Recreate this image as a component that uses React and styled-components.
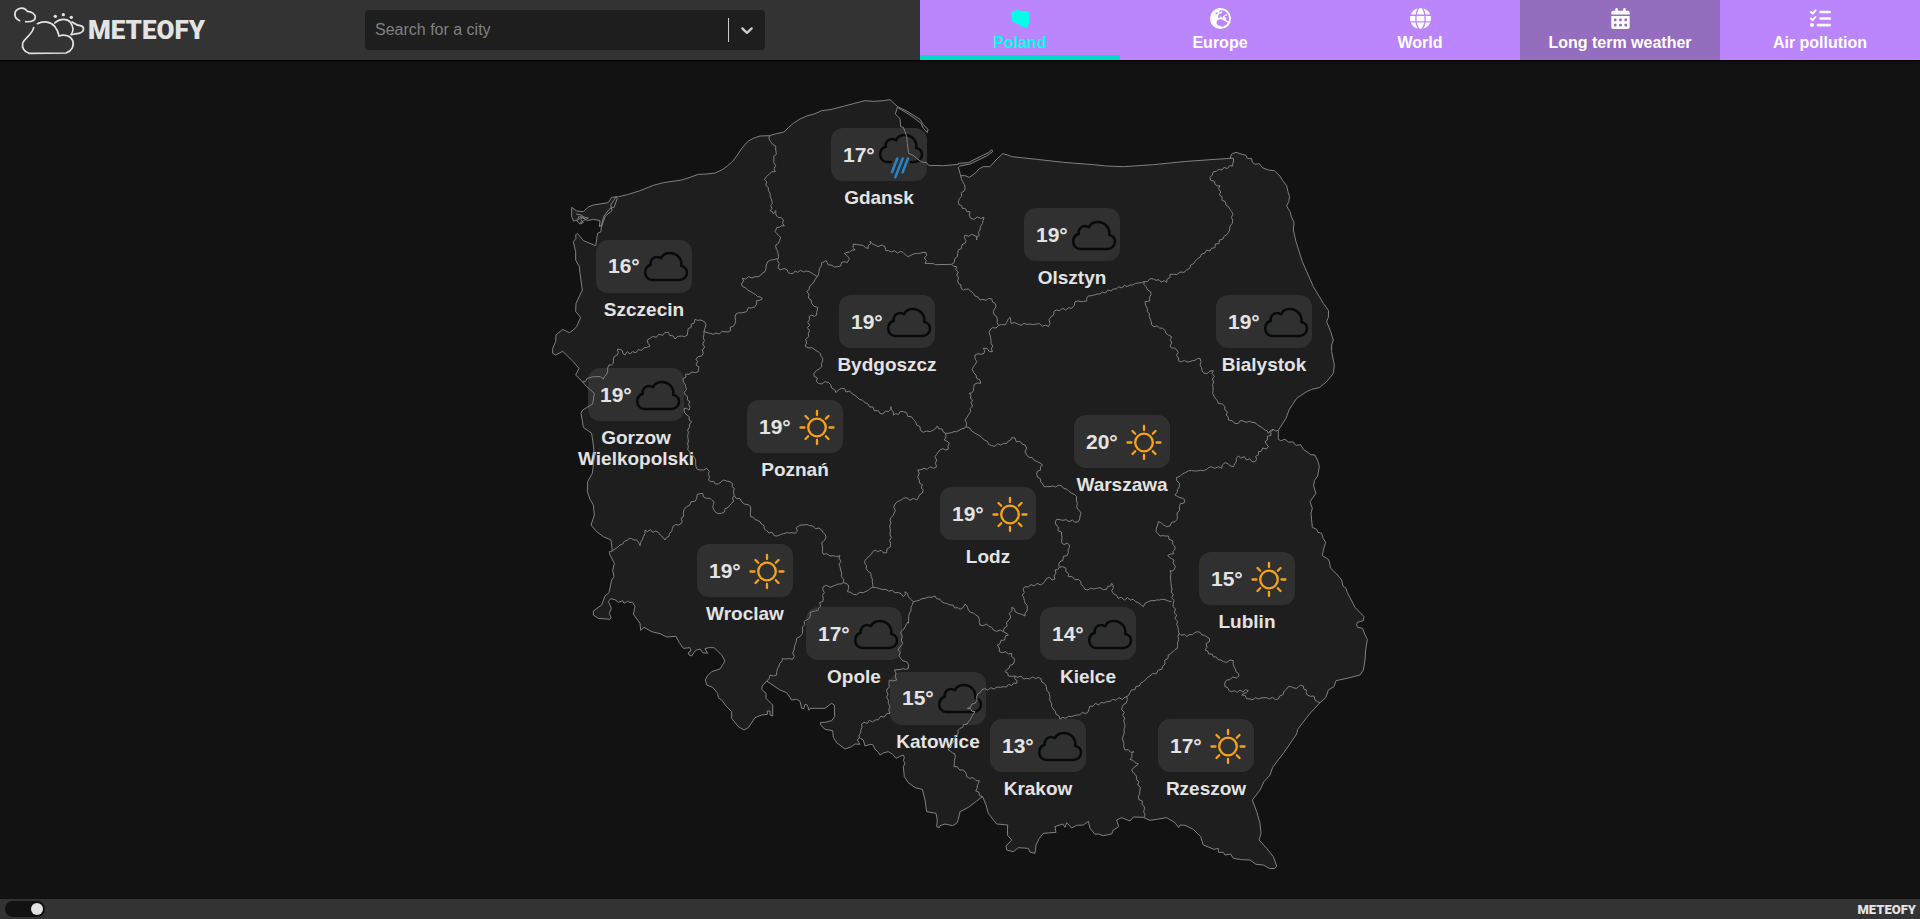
import React from "react";
import styled, { createGlobalStyle } from "styled-components";
import { FaEarthEurope, FaGlobe, FaCalendarDays, FaListCheck } from "react-icons/fa6";

const GlobalStyle = createGlobalStyle`
  * { box-sizing: border-box; }
  body {
    margin: 0;
    background: #121212;
    color: #e3e3e3;
    font-family: "Liberation Sans", Arial, sans-serif;
  }
`;

const Page = styled.div`
  display: flex;
  flex-direction: column;
  min-height: 100vh;
`;

const Header = styled.header`
  display: flex;
  height: 60px;
  background: #333;
  box-shadow: 0 1px 2px #000;
`;

const Brand = styled.a`
  display: flex;
  align-items: center;
  width: 210px;
  padding-left: 12px;
  color: #e3e3e3;
  text-decoration: none;
  svg { flex: none; }
`;

const Wordmark = styled.span`
  font-family: Roboto, "Open Sans", sans-serif;
  font-weight: 900;
  font-size: ${(p) => (p.$small ? 13 : 26)}px;
  line-height: 1;
`;

const SearchArea = styled.form`
  display: flex;
  flex: 1;
  align-items: center;
  justify-content: center;
`;

const SearchBox = styled.div`
  display: flex;
  align-items: center;
  width: 400px;
  height: 40px;
  border-radius: 4px;
  background: #1e1e1e;
`;

const SearchInput = styled.input`
  flex: 1;
  min-width: 0;
  height: 100%;
  padding: 0 10px;
  border: 0;
  outline: 0;
  background: none;
  color: #e3e3e3;
  font: 16px "Liberation Sans", Arial, sans-serif;
  &::placeholder { color: #808080; opacity: 1; }
`;

const SearchToggle = styled.button`
  display: flex;
  align-items: center;
  justify-content: center;
  width: 37px;
  height: 24px;
  padding: 0;
  border: 0;
  border-left: 1px solid #ccc;
  background: none;
  color: #ccc;
`;

const Nav = styled.nav`
  display: flex;
  width: 1000px;
`;

const NavLink = styled.a`
  display: flex;
  flex: 1;
  flex-direction: column;
  align-items: center;
  gap: 4px;
  padding-top: 8px;
  background: ${(p) => (p.$hovered ? "#946dbf" : "#bb86fc")};
  border-bottom: 5px solid ${(p) => (p.$active ? "#03dac6" : "transparent")};
  color: ${(p) => (p.$active ? "#00ffe7" : "#fff")};
  font-size: 16px;
  font-weight: 700;
  line-height: 20px;
  text-decoration: none;
  svg { width: 21px; height: 21px; flex: none; }
`;

const Main = styled.main`
  flex: 1;
  padding: 30px 0 19px;
`;

const Map = styled.div`
  position: relative;
  width: 100%;
  max-width: 840px;
  aspect-ratio: 840 / 790;
  margin: 0 auto;
`;

const MapLayer = styled.svg`
  position: absolute;
  inset: 0;
  width: 100%;
  height: 100%;
  pointer-events: none;
`;

const Pin = styled.a`
  position: absolute;
  left: ${(p) => (p.$x / 840) * 100}%;
  top: ${(p) => (p.$y / 790) * 100}%;
  display: flex;
  flex-direction: column;
  align-items: center;
  gap: 6px;
  width: 130px;
  margin-left: -65px;
  color: #e3e3e3;
  text-decoration: none;
`;

const Reading = styled.span`
  display: flex;
  align-items: center;
  justify-content: space-between;
  width: 96px;
  height: 53px;
  padding: 0 1px 0 12px;
  border-radius: 12px;
  background: #303030;
  font-size: 21px;
  font-weight: 700;
  svg { width: 50px; height: 50px; }
`;

const CityName = styled.span`
  font-size: 19px;
  font-weight: 700;
  line-height: 21px;
  text-align: center;
`;

const Footer = styled.footer`
  display: flex;
  align-items: center;
  justify-content: space-between;
  height: 20px;
  padding: 0 4px 0 5px;
  background: #333;
`;

const ThemeSwitch = styled.input`
  appearance: none;
  display: flex;
  align-items: center;
  justify-content: flex-end;
  width: 40px;
  height: 16px;
  margin: 0;
  padding: 0 2px;
  border-radius: 8px;
  background: #121212;
  &::after {
    content: "";
    width: 12px;
    height: 12px;
    border-radius: 50%;
    background: #e3e3e3;
  }
`;

/* The country is surveyed on six sheets; each has its own origin on the map. */
const SHEETS = {
  nw: [0, 0],
  ne: [1200, 0],
  w: [0, 780],
  e: [1200, 780],
  sw: [120, 1530],
  se: [1260, 1530],
};

const toPoints = (parts) =>
  parts.flatMap(([sheet, text]) => {
    const [dx, dy] = SHEETS[sheet];
    return text.trim().split(/\s+/).map((pair) => {
      const [x, y] = pair.split(",").map(Number);
      return [x + dx, y + dy];
    });
  });

const toPath = (points) => "M" + points.map((p) => p.join(" ")).join("L");

/* Adds the small meanders of a land border between surveyed points. */
const meander = (points) => {
  const out = [points[0]];
  for (let i = 1; i < points.length; i += 1) {
    const [ax, ay] = points[i - 1];
    const [bx, by] = points[i];
    const length = Math.hypot(bx - ax, by - ay);
    const steps = Math.max(1, Math.round(length / 9));
    for (let s = 1; s < steps; s += 1) {
      const t = s / steps;
      const noise = Math.sin((ax + s * 37) * 12.9 + (ay + s * 17) * 78.2) * 3.5;
      out.push([
        Math.round(ax + (bx - ax) * t - ((by - ay) / length) * noise),
        Math.round(ay + (by - ay) * t + ((bx - ax) / length) * noise),
      ]);
    }
    out.push([bx, by]);
  }
  return out;
};

const OUTLINE = toPath(toPoints([
  ["nw", "236,320 262,314 300,302 340,286 370,278 425,270 450,262 475,253 500,252 525,249 545,240 562,228 578,214 590,198 602,180 615,163 627,152 640,145 660,138 688,137 710,131 732,126 745,113 760,100 780,87 800,78 825,71 845,62 870,59 910,49 940,41 975,32 1000,34 1030,32 1050,29 1073,50 1105,66 1140,88 1150,104 1164,118 1162,128 1150,115 1143,100 1110,75 1072,52 1066,72 1080,86 1082,110 1090,112 1095,125 1100,140 1102,160 1106,190 1122,198 1130,205 1145,216 1160,218 1166,226 1210,227 1255,223"],
  ["ne", "55,220 85,218 130,195 145,188 156,179 158,185 140,198 90,222 60,228 55,232 62,257 75,257 88,262 105,250 118,236 130,230 150,230 168,210 188,191 203,195 215,200 290,208 370,217 460,224 500,228 550,230 640,224 740,214 870,205 875,192 888,187 900,191 918,196 922,205 935,206 937,217 945,223 958,221 967,233 985,240 1003,242 1020,258 1028,272 1040,287 1044,305 1049,320 1046,335 1040,348 1050,365 1055,382 1062,397 1060,420 1068,455 1087,515 1120,590 1150,640 1166,662 1165,682 1160,695 1172,725 1180,750 1175,765 1175,785 1182,820"],
  ["e", "1183,45 1180,70 1160,95 1138,113 1115,118 1100,125 1070,145 1058,163 1047,180 1038,205 1015,241 1015,268 1022,272 1035,268 1045,276 1060,276 1065,284 1070,286 1082,284 1090,298 1105,308 1112,314 1125,315 1134,335 1138,350 1133,378 1123,392 1121,408 1128,430 1110,455 1117,475 1113,490 1117,532 1130,538 1134,547 1145,550 1150,566 1157,577 1150,600 1147,617 1165,628 1168,635 1172,655 1190,672 1205,690 1209,708 1218,715 1222,728 1245,772 1272,800 1270,812 1252,817 1250,825"],
  ["se", "1190,75 1193,82 1208,85 1214,102 1222,118 1217,150 1215,180 1210,210 1200,225 1165,234 1128,242 1122,260 1105,270 1098,292 1080,308 1050,340 1013,388 1010,402 970,460 938,502 930,525 912,545 900,570 877,600 890,635 900,670 903,700 897,720 920,745 940,770 950,798 945,805 930,806 910,795 888,793 870,780 845,779 820,775 812,762 795,765 790,757 775,757 775,745 762,748 730,735 725,720 722,710 700,688 675,676 660,675 656,683 645,668 620,653 590,658 570,661 550,652 520,651 510,663 485,653 470,660 476,680 460,690 455,702 430,707 415,702 405,703 390,685 385,664 370,675 350,676 335,684 320,668 315,682 308,672 285,680 288,697 250,700 238,715 228,735 225,760 210,756 205,745 175,743 160,755 140,750 138,738 155,720 142,705 143,675 110,672 85,640 78,615 68,590"],
  ["sw", "1190,603 1165,622 1140,635 1135,658 1130,670 1118,677 1095,672 1080,677 1078,683 1070,680 1072,660 1068,640 1040,635 1035,600 1027,568 1005,563 985,548 973,530 970,500 975,490 970,482 973,472 970,465 958,470 948,475 938,463 925,455 912,458 900,465 895,457 885,447 878,434 870,433 855,438 850,420 838,413 832,420 840,433 825,432 815,440 795,447 770,428 760,412 758,392 735,388 722,375 722,367 735,367 755,362 764,350 763,315 755,310 735,325 690,325 687,331 682,315 675,313 672,326 665,325 660,304 650,298 635,300 627,288 620,278 600,270 585,260 560,243 547,258 545,268 558,280 558,295 578,315 578,348 570,345 570,333 562,333 562,343 545,345 525,353 505,383 492,390 475,380 455,355 455,335 440,320 425,300 415,293 413,280 398,262 380,255 376,240 382,228 395,215 420,207 435,183 425,165 402,143 385,143 375,146 383,160 368,158 360,147 350,150 343,155 335,168 327,165 325,157 333,153 330,143 310,145 298,128 288,109 260,111 240,101 215,95 192,82 182,91 180,70 160,42 165,20 158,7"],
  ["w", "270,757 262,754 252,760 248,752 235,757 225,749 212,746 205,755 210,765 214,775 208,790 213,802 210,808 175,805 160,795 160,783 185,765 195,738 207,728 215,690 222,680 218,662 223,640 210,615 208,605 217,603 213,570 190,560 170,545 153,525 163,495 160,465 150,448 142,425 143,395 157,370 163,320 160,285 155,250 130,232 127,212 123,190 128,180 158,162 163,130 140,110 128,96 107,75 117,55 97,32"],
  ["nw", "68,784 47,795 38,790 38,775 47,755 48,735 68,718 88,728 100,720 110,710 122,682 107,665 108,640 127,600 120,550 118,530 107,510 107,485 100,455 108,445 107,435 112,430 130,452 150,460 167,467 173,430 183,425 184,405 178,410 180,392 160,388 142,392 128,382 122,388 130,398 120,402 108,390 101,394 95,380 95,352 110,363 130,365 145,351 160,345 205,338 215,322 232,320"],
])) + "Z";

const BORDERS = [
  [["nw", "688,137 692,155 707,168 708,185 702,207 706,245 688,252 673,268 690,310 697,340 690,362 700,372 707,362 708,375 730,390 733,408 710,412 705,425 722,442 715,460 707,465 716,500 712,512 720,540 735,536 752,551 765,543 808,545 832,560"]],
  [["nw", "712,505 683,515 675,545 655,560 607,565 608,590 640,610 667,627 650,632 645,650 625,653 620,665 588,672 585,700 570,712 572,722 555,725 520,733 492,724 498,705 488,692 465,688 462,700 445,715 442,735 425,738 405,747 385,727 330,745 322,750 330,768 270,792 262,785 255,795 240,778 232,778 232,795 222,800 220,820 207,825 200,852 190,867 170,860 150,863 128,876"]],
  [["nw", "492,724 490,790 468,808 475,840"], ["w", "475,65 437,72 430,95 437,110 436,135 450,155 447,180 432,175 440,195 455,215 443,240 445,290 450,315 465,325 468,350 480,360 500,355 508,365 505,390 535,402 550,390 570,395 583,415 583,437"]],
  [["w", "583,437 575,460 545,490 525,485 518,470 522,455 510,445 490,440 488,430 472,433 470,445 440,470 430,490 422,522 400,528 395,545 375,570 355,547 315,540 310,560 300,587 290,570 268,565 240,585 217,603"]],
  [["w", "583,437 605,455 632,470 632,500 660,515 680,542 712,558 740,548 765,550 775,528 800,523 845,540 858,560 845,578 850,613 880,617 900,617 900,650 910,698 925,705 922,725 940,733 970,728 1000,712"]],
  [["w", "910,698 880,708 850,710 850,745 835,775"], ["sw", "715,30 690,38 685,58 672,65 668,90 660,110 650,115 642,150 638,178 607,176 593,205 590,225 570,225 560,243"]],
  [["w", "1000,712 1075,727 1090,740 1095,725 1105,740 1120,755 1155,745 1185,738 1205,755 1230,765 1260,778"], ["e", "75,762 85,780 115,800 120,825 140,822 160,840 190,845"]],
  [["w", "1120,755 1108,790 1105,820"], ["sw", "985,65 962,100 968,130 955,150 962,175 980,185 985,205 943,210 950,240 928,240 928,262 920,275 925,300 930,340 885,360 845,372 842,400 838,413"]],
  [["w", "1000,712 993,670 978,655 975,632 1005,600 1040,608 1052,580 1050,510 1062,490 1065,462 1090,445 1130,450 1150,420 1138,390 1133,360 1190,350 1185,320 1200,300 1225,297 1228,280 1213,270 1217,250"]],
  [["nw", "832,560 800,605 815,640 833,652 830,675 807,680 805,730 795,768 815,773 835,785 848,805"], ["w", "845,50 822,70 835,100 865,97 888,128 905,115 935,130 975,158 1020,190 1045,185 1053,170 1060,195 1090,185 1120,208 1150,247 1180,240 1192,228 1217,250 1250,245 1278,230"]],
  [["nw", "832,560 845,518 858,511 865,525 892,530 915,515 922,518 928,505 913,490 945,480 940,462 960,465 985,475 990,453 1005,465 1035,470 1037,482 1090,488 1102,500 1130,490 1158,488 1155,520"]],
  [["ne", "35,523 52,500 55,480 75,460 75,435 105,437 110,450 120,420 132,382 92,385 90,365 67,355 55,335 75,292 62,257"]],
  [["ne", "35,523 50,530 55,580 70,600 85,597 120,630 155,627 168,650 160,665 170,680 175,707 150,720 150,735 158,785 130,775 132,790 105,795"], ["e", "110,35 97,58 108,75 122,100 103,103 100,122 87,130 98,150 92,185 75,210 78,230"]],
  [["ne", "175,707 195,705 210,682 213,700 235,703 260,703 290,702 325,710 333,680 350,660 395,655 405,635 440,633 445,618 480,612 520,597 570,585 612,575 640,567 680,577 690,553 712,553 740,540 800,480 810,483 865,428 878,390 875,365 838,315 840,287 825,283 810,262 820,245 878,228 880,205 870,205"]],
  [["ne", "612,575 618,590 632,605 630,632 615,635 622,655 635,705 668,715 685,735 695,740 690,768 710,780 715,812 750,815 780,805"], ["e", "780,45 792,70 820,62 818,130 835,160 855,170 865,210 885,220 910,213 945,218 975,240 985,250 1000,238 1015,241"]],
  [["e", "1000,240 975,275 985,290 955,305 945,335 895,318 880,350 855,338 845,355 815,350 790,362 745,363 710,382 718,410 705,435 735,450 718,470 712,500 705,515 680,530 655,515 648,545 660,558 685,558 705,590 700,612 683,617 702,630 703,658 690,662 693,700 700,760"], ["se", "657,100"]],
  [["e", "78,230 95,243 120,258 155,287 200,280 215,263 255,285 260,315 308,345 290,372 312,410 365,408 410,440 410,470 423,490 415,515 350,508 348,525 365,555 365,578 388,585 385,608 360,635 358,652"]],
  [["e", "358,652 345,660 345,687 320,685 310,700 255,710 247,735 262,775 255,798 235,790 215,772 207,810 190,845"]],
  [["se", "130,95 145,105 112,135 118,155 155,160 163,185 135,215 145,228 165,228 170,250 130,260 65,270 50,290 45,310 22,325 45,335 25,365 0,385 -15,415 -35,450 -15,462 -18,500 10,510 20,530 58,542 47,573 68,590"]],
  [["se", "165,228 200,235 235,232 253,250 260,270 270,290 275,320 300,357 350,345 385,335 390,318 440,305 495,292 510,278 570,228 605,208 625,165 652,145 657,100"]],
  [["se", "500,288 498,310 487,320 495,380 488,420 495,450 522,455 510,478 535,492 515,510 530,530 540,570 535,590 553,620 552,652"]],
  [["se", "657,100 680,110 712,95 748,115 735,150 760,170 790,185 820,182 822,200 837,228 800,240 795,260 815,275 865,272 845,285 870,297 920,293 955,297 985,260 1010,265 1022,255 1040,270 1042,285 1062,288 1065,300 1080,308"]],
  [["e", "358,652 378,655 385,680 415,688 435,718 470,715 500,718 515,700 520,715 515,722 535,745 580,748 610,770 625,755 650,750 665,748 695,755"]],
].map((parts) => toPath(meander(toPoints(parts))));

const STRAIGHT_BORDERS = [
  "M1155 520L1180 521L1186 524L1235 523",
  "M184 405L192 378L210 355L222 352L232 325L228 320L222 330L212 345L216 362L196 378L190 395L184 412",
  "M108 372L125 375L135 388L118 378L110 392L126 380L145 384L120 398",
];

const Cloud = () => (
  <svg viewBox="0 0 50 50" fill="none" stroke="#060a08" strokeWidth="2.5" strokeLinejoin="round" aria-hidden="true">
    <path d="M11.5 39C7 39 4.2 35.500 4.2 31.500C4.2 28 6.2 25 9.8 23.8C9 19.500 12 16 16 16C17.7 16 19 16.500 20 17.3C21.500 13.8 24.7 12 28.500 12C35.500 12 41.3 17.500 40.3 25C44 25.500 46 28.500 46 31.500C46 36 42.500 39 38.500 39Z" />
  </svg>
);

const Rain = () => (
  <svg viewBox="0 0 50 50" fill="none" strokeWidth="2.5" strokeLinecap="round" aria-hidden="true">
    <path stroke="#060a08" d="M15 32H11.500C7 32 4.2 28.500 4.2 24.500C4.2 21 6.2 18 9.8 16.8C9 12.500 12 9 16 9C17.7 9 19 9.500 20 10.3C21.500 6.8 24.7 5 28.500 5C35.500 5 41.3 10.500 40.3 18C44 18.500 46 21.500 46 24.500C46 29 42.500 32 38.500 32H35" />
    <path stroke="#2b84c6" d="M21.3 28.500L16 42.3M26.7 28.500L19.3 47.3M32 28.500L26.6 42.3" />
  </svg>
);

const Sun = () => (
  <svg viewBox="0 0 50 50" fill="none" stroke="#f5a31a" strokeWidth="2.3" strokeLinecap="round" aria-hidden="true">
    <circle cx="25" cy="25.5" r="8.8" />
    <path d="M25 9V13M25 38V42M8.500 25.500H12.500M37.500 25.500H41.500M13.500 14L16.200 16.700M36.500 14L33.800 16.700M13.500 37L16.200 34.300M36.500 37L33.800 34.300" />
  </svg>
);

const PolandIcon = () => (
  <svg viewBox="0 0 21 21" fill="currentColor" aria-hidden="true">
    <path d="M1 4.500L5 3L8.500 1.500L11 3L18 3.200L19 5L20 9L19 12L20 15L17.200 17.500L18 20L14 18.800L11 18.200L9 16.500L6 15.200L2 13.500Z" />
  </svg>
);

const Chevron = () => (
  <svg width="20" height="20" viewBox="0 0 20 20" fill="currentColor" aria-hidden="true">
    <path d="M4.516 7.548c0.436-0.446 1.043-0.481 1.576 0l3.908 3.747 3.908-3.747c0.533-0.481 1.141-0.446 1.574 0 0.436 0.445 0.408 1.197 0 1.615-0.406 0.418-4.695 4.502-4.695 4.502-0.217 0.223-0.502 0.335-0.787 0.335s-0.570-0.112-0.789-0.335c0 0-4.287-4.084-4.695-4.502s-0.436-1.170 0-1.615z" />
  </svg>
);

const LogoDrawing = () => (
  <svg width="76" height="60" viewBox="36 0 228 180" fill="none" stroke="#e3e3e3" strokeWidth="5" strokeLinecap="round" aria-hidden="true">
    <path d="M59 62C45 57 40 42 49 31C58 21 74 22 82 34C94 34 106 42 106 52C105 62 92 66 77 65" />
    <path d="M112 71C130 62 152 65 164 79C173 91 176 100 177 108C194 102 212 107 218 122C224 138 215 153 198 159L87 160C72 155 65 142 68 130C72 116 96 105 101 83" />
    <path d="M164 69C179 55 202 55 211 67C221 81 220 95 213 104" />
    <path d="M216 66C225 72 232 76 241 77C255 80 252 94 242 98C233 102 222 101 215 104" />
    <g fill="#e3e3e3" stroke="none">
      <circle cx="166" cy="49" r="5" />
      <circle cx="190" cy="44" r="5" />
      <circle cx="214" cy="52" r="5" />
    </g>
  </svg>
);

const ICONS = { cloud: Cloud, rain: Rain, sun: Sun };

const CITIES = [
  { name: "Gdansk", temp: 17, sky: "rain", x: 339, y: 38 },
  { name: "Szczecin", temp: 16, sky: "cloud", x: 104, y: 150 },
  { name: "Bydgoszcz", temp: 19, sky: "cloud", x: 347, y: 205 },
  { name: "Olsztyn", temp: 19, sky: "cloud", x: 532, y: 118 },
  { name: "Bialystok", temp: 19, sky: "cloud", x: 724, y: 205 },
  { name: "Gorzow Wielkopolski", temp: 19, sky: "cloud", x: 96, y: 278 },
  { name: "Poznań", temp: 19, sky: "sun", x: 255, y: 310 },
  { name: "Warszawa", temp: 20, sky: "sun", x: 582, y: 325 },
  { name: "Lodz", temp: 19, sky: "sun", x: 448, y: 397 },
  { name: "Wroclaw", temp: 19, sky: "sun", x: 205, y: 454 },
  { name: "Lublin", temp: 15, sky: "sun", x: 707, y: 462 },
  { name: "Opole", temp: 17, sky: "cloud", x: 314, y: 517 },
  { name: "Kielce", temp: 14, sky: "cloud", x: 548, y: 517 },
  { name: "Katowice", temp: 15, sky: "cloud", x: 398, y: 582 },
  { name: "Krakow", temp: 13, sky: "cloud", x: 498, y: 629 },
  { name: "Rzeszow", temp: 17, sky: "sun", x: 666, y: 629 },
];

const LINKS = [
  { label: "Poland", Icon: PolandIcon, active: true },
  { label: "Europe", Icon: FaEarthEurope },
  { label: "World", Icon: FaGlobe },
  { label: "Long term weather", Icon: FaCalendarDays, hovered: true },
  { label: "Air pollution", Icon: FaListCheck },
];

export default function App() {
  return (
    <Page>
      <GlobalStyle />
      <Header>
        <Brand href="#home">
          <LogoDrawing />
          <Wordmark>METEOFY</Wordmark>
        </Brand>
        <SearchArea>
          <SearchBox>
            <SearchInput type="text" placeholder="Search for a city" aria-label="Search for a city" />
            <SearchToggle type="button" aria-label="Show cities">
              <Chevron />
            </SearchToggle>
          </SearchBox>
        </SearchArea>
        <Nav>
          {LINKS.map(({ label, Icon, active, hovered }) => (
            <NavLink key={label} href="#map" $active={active} $hovered={hovered}>
              <Icon />
              {label}
            </NavLink>
          ))}
        </Nav>
      </Header>
      <Main>
        <Map>
          <MapLayer viewBox="0 0 2520 2370" aria-hidden="true">
            <path d={OUTLINE} fill="#1e1e1e" />
          </MapLayer>
          {CITIES.map(({ name, temp, sky, x, y }) => {
            const Icon = ICONS[sky];
            return (
              <Pin key={name} href="#city" $x={x} $y={y}>
                <Reading>
                  {temp}°
                  <Icon />
                </Reading>
                <CityName>{name}</CityName>
              </Pin>
            );
          })}
          <MapLayer viewBox="0 0 2520 2370" fill="none" stroke="#808080" strokeWidth="3" strokeLinejoin="round" aria-hidden="true">
            <path d={OUTLINE} />
            {[...BORDERS, ...STRAIGHT_BORDERS].map((d) => (
              <path key={d} d={d} />
            ))}
          </MapLayer>
        </Map>
      </Main>
      <Footer>
        <ThemeSwitch type="checkbox" role="switch" defaultChecked aria-label="Dark theme" />
        <Wordmark $small>METEOFY</Wordmark>
      </Footer>
    </Page>
  );
}
